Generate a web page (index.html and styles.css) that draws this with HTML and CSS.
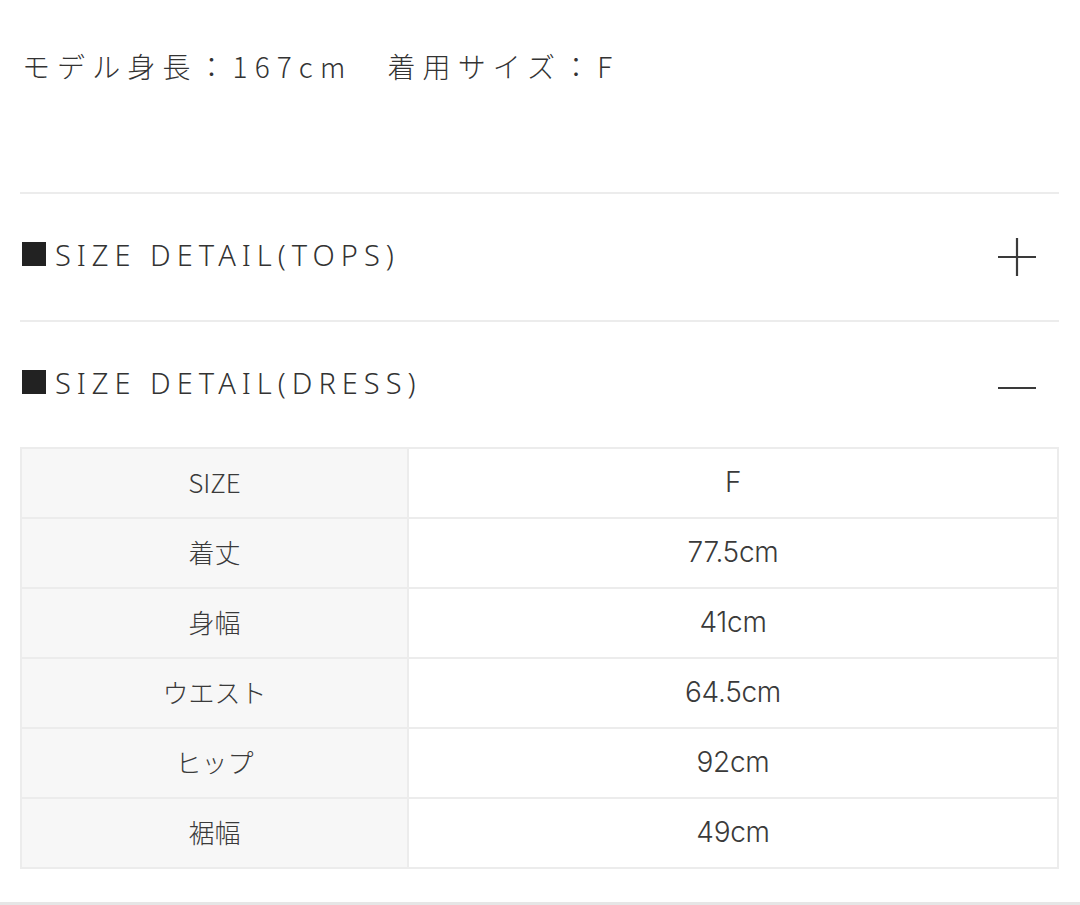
FILE: index.html
```html
<!DOCTYPE html>
<html lang="ja">
<head>
<meta charset="utf-8">
<link rel="stylesheet" href="styles.css">
</head>
<body>
<div class="page">
  <p class="model">モデル身長：167cm　着用サイズ：F</p>
  <div class="acc">
    <div class="acc-head">
      <span class="acc-title"><span class="sq"></span>SIZE DETAIL(TOPS)</span>
      <svg class="icon" width="40" height="40" viewBox="0 0 40 40"><path d="M1 20H39M20 1V39" stroke="#3a3a3a" stroke-width="2.2" fill="none"/></svg>
    </div>
  </div>
  <div class="acc open">
    <div class="acc-head">
      <span class="acc-title"><span class="sq"></span>SIZE DETAIL(DRESS)</span>
      <svg class="icon" width="40" height="40" viewBox="0 0 40 40"><path d="M1 23H39" stroke="#3a3a3a" stroke-width="2.2" fill="none"/></svg>
    </div>
    <table class="size">
      <tr><th>SIZE</th><td>F</td></tr>
      <tr><th>着丈</th><td>77.5cm</td></tr>
      <tr><th>身幅</th><td>41cm</td></tr>
      <tr><th>ウエスト</th><td>64.5cm</td></tr>
      <tr><th>ヒップ</th><td>92cm</td></tr>
      <tr><th>裾幅</th><td>49cm</td></tr>
    </table>
  </div>
</div>
<div class="bottom-line"></div>
</body>
</html>
```
FILE: styles.css
```css
html, body {
  margin: 0;
  padding: 0;
  background: #fff;
}
body {
  width: 1080px;
  height: 905px;
  overflow: hidden;
  position: relative;
  font-family: "Noto Sans", "Noto Sans CJK JP", sans-serif;
  color: #333;
}
.page {
  padding: 0 21px 0 20px;
}
.model {
  margin: 0;
  padding-top: 46px;
  padding-left: 2px;
  height: 194px;
  box-sizing: border-box;
  font-family: "Noto Sans CJK JP", sans-serif;
  font-weight: 300;
  font-size: 28px;
  line-height: 40px;
  letter-spacing: 7.1px;
  color: #333;
  border-bottom: 2px solid #ececec;
}
.acc {
  border-bottom: 2px solid #ececec;
}
.acc.open {
  border-bottom: none;
}
.acc-head {
  height: 126px;
  box-sizing: border-box;
  display: flex;
  align-items: center;
  justify-content: space-between;
  padding: 0 22px 6px 2px;
}
.acc-title {
  display: flex;
  align-items: center;
  font-family: "Noto Sans", sans-serif;
  font-weight: 300;
  font-size: 29px;
  letter-spacing: 6px;
  color: #333;
}
.sq {
  display: inline-block;
  width: 24px;
  height: 24px;
  background: #222;
  margin-right: 9px;
}
.icon {
  margin-top: 6px;
}
.size {
  width: 100%;
  margin-top: -1px;
  border-collapse: collapse;
  border: 2px solid #ececec;
}
.size th, .size td {
  height: 65px;
  border: 2px solid #ececec;
  text-align: center;
  font-weight: 400;
  color: #3a3a3a;
  padding: 0 0 3px;
}
.size th {
  width: 385px;
  background: #f7f7f7;
  font-family: "Noto Sans CJK JP", sans-serif;
  font-weight: 300;
  font-size: 26px;
  letter-spacing: 0;
}
.size td {
  background: #fff;
  font-family: Inter, "Noto Sans", sans-serif;
  font-weight: 300;
  font-size: 28px;
  letter-spacing: -0.3px;
}
.bottom-line {
  position: absolute;
  left: 0;
  right: 0;
  bottom: 0;
  height: 3px;
  background: #e6e6e6;
}
```
